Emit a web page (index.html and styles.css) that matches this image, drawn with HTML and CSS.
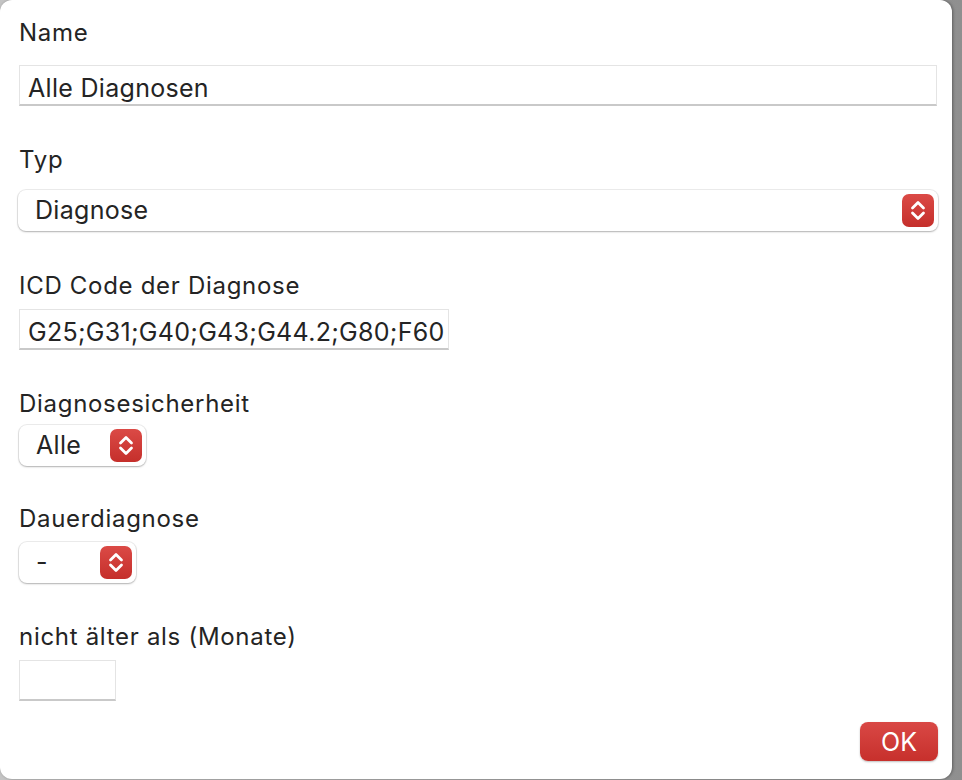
FILE: index.html
```html
<!DOCTYPE html>
<html lang="de">
<head>
<meta charset="utf-8">
<title>Filter</title>
<link rel="stylesheet" href="styles.css">
</head>
<body>
<div class="panel">
  <div class="field field-name">
    <label class="label">Name</label>
    <input class="textbox textbox-full" type="text" value="Alle Diagnosen">
  </div>
  <div class="field field-typ">
    <label class="label">Typ</label>
    <div class="select select-full">
      <span class="select-text">Diagnose</span>
      <span class="stepper"><svg viewBox="0 0 32 33" width="32" height="33"><path d="M10.5 14 L16 8.5 L21.5 14 M10.5 19 L16 24.5 L21.5 19" fill="none" stroke="#fff" stroke-width="2.8" stroke-linecap="round" stroke-linejoin="round"/></svg></span>
    </div>
  </div>
  <div class="field field-icd">
    <label class="label">ICD Code der Diagnose</label>
    <input class="textbox textbox-icd" type="text" value="G25;G31;G40;G43;G44.2;G80;F60">
  </div>
  <div class="field field-sicher">
    <label class="label">Diagnosesicherheit</label>
    <div class="select select-alle">
      <span class="select-text">Alle</span>
      <span class="stepper"><svg viewBox="0 0 32 33" width="32" height="33"><path d="M10.5 14 L16 8.5 L21.5 14 M10.5 19 L16 24.5 L21.5 19" fill="none" stroke="#fff" stroke-width="2.8" stroke-linecap="round" stroke-linejoin="round"/></svg></span>
    </div>
  </div>
  <div class="field field-dauer">
    <label class="label">Dauerdiagnose</label>
    <div class="select select-dash">
      <span class="select-text">-</span>
      <span class="stepper"><svg viewBox="0 0 32 33" width="32" height="33"><path d="M10.5 14 L16 8.5 L21.5 14 M10.5 19 L16 24.5 L21.5 19" fill="none" stroke="#fff" stroke-width="2.8" stroke-linecap="round" stroke-linejoin="round"/></svg></span>
    </div>
  </div>
  <div class="field field-monate">
    <label class="label">nicht älter als (Monate)</label>
    <input class="textbox textbox-small" type="text" value="">
  </div>
  <div class="actions">
    <button class="ok-button" type="button">OK</button>
  </div>
</div>
</body>
</html>
```
FILE: styles.css
```css
html, body {
  margin: 0;
  padding: 0;
}
body {
  width: 962px;
  height: 780px;
  overflow: hidden;
  background: linear-gradient(to right, #c4c4c4, #8f8f8f);
  font-family: Inter, "Noto Sans", sans-serif;
  color: #242424;
}
.panel {
  box-sizing: border-box;
  width: 952px;
  height: 779px;
  background: #fff;
  border-radius: 12px;
  box-shadow: 1px 0 3px rgba(0, 0, 0, 0.35);
  padding: 21px 0 0 19px;
  display: flex;
  flex-direction: column;
}
.field {
  display: flex;
  flex-direction: column;
  align-items: flex-start;
}
.label {
  font-size: 24px;
  letter-spacing: 0.7px;
  line-height: 24px;
  height: 24px;
}
.field-name .label { margin-bottom: 20px; }
.field-typ { margin-top: 42px; }
.field-typ .label { margin-bottom: 18px; }
.field-icd { margin-top: 43px; }
.field-icd .label { margin-bottom: 11px; }
.field-sicher { margin-top: 42px; }
.field-sicher .label { margin-bottom: 9px; }
.field-dauer { margin-top: 41px; }
.field-dauer .label { margin-bottom: 11px; }
.field-monate { margin-top: 42px; }
.field-monate .label { margin-bottom: 11px; }

.textbox {
  box-sizing: border-box;
  height: 41px;
  margin: 0;
  padding: 5px 2px 0 8px;
  border: 1px solid #e4e4e4;
  border-bottom: 2px solid #c9c9c9;
  border-radius: 0;
  background: #fff;
  font: inherit;
  font-size: 25px;
  letter-spacing: 0.3px;
  color: #242424;
  outline: none;
}
.textbox-full { width: 918px; }
.textbox-icd { width: 430px; }
.textbox-small { width: 97px; }

.select {
  box-sizing: border-box;
  height: 41px;
  display: flex;
  align-items: center;
  justify-content: space-between;
  background: #fff;
  border-radius: 8px;
  box-shadow: 0 0 0 1px rgba(0, 0, 0, 0.07), 0 1px 2px rgba(0, 0, 0, 0.25);
  padding: 0 4px 0 17px;
}
.select-full { width: 920px; margin-left: -1px; }
.select-alle { width: 127px; }
.select-dash { width: 117px; }
.select-text {
  font-size: 25px;
  letter-spacing: 0.3px;
  line-height: 41px;
}
.stepper {
  width: 32px;
  height: 33px;
  border-radius: 7px;
  background: linear-gradient(to bottom, #db4a46, #c52f2b);
  display: flex;
}
.stepper svg { display: block; }

.actions {
  margin-top: auto;
  display: flex;
  justify-content: flex-end;
  padding: 0 14px 18px 0;
}
.ok-button {
  box-sizing: border-box;
  width: 78px;
  height: 39px;
  border: none;
  border-radius: 8px;
  background: linear-gradient(to bottom, #d94845, #c7302c);
  box-shadow: 0 1px 2px rgba(0, 0, 0, 0.25);
  color: #fff;
  font-family: Inter, "Noto Sans", sans-serif;
  font-size: 25px;
  padding: 0;
}
```
